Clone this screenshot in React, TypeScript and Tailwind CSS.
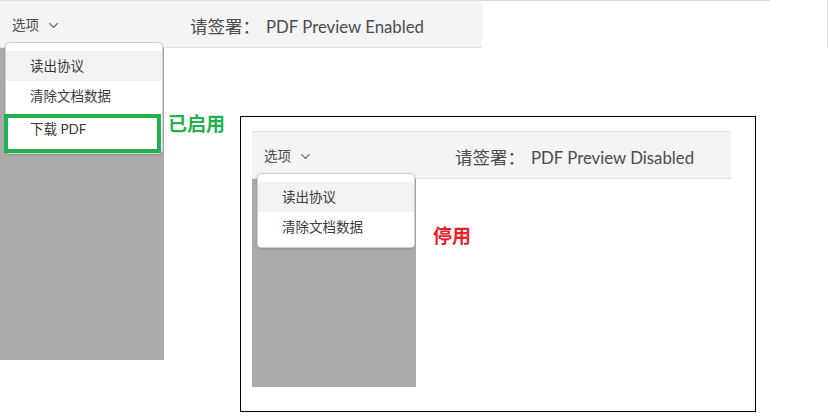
import { ChevronDown } from "lucide-react";

const font = { fontFamily: 'Lato, "Noto Sans CJK SC", sans-serif' };

function Header({ title, gap }: { title: string; gap: string }) {
  return (
    <div className="flex h-[48px] items-center border-y border-[#e2e2e2] bg-[#f4f4f4] pt-[2px] text-[#4b4b4b]">
      <div className={`flex ${gap} items-center gap-[7px] pl-[12px] text-[13.5px]`}>
        <span>选项</span>
        <ChevronDown className="h-[15px] w-[15px] text-[#6b6b6b]" strokeWidth={2.2} />
      </div>
      <div className="flex items-center pt-[4px] text-[17.5px]">
        <span>请签署：</span>
        <span className="ml-[6px] text-[16.8px]">{title}</span>
      </div>
    </div>
  );
}

function Menu({ download }: { download?: boolean }) {
  return (
    <div className="absolute left-[5px] top-[-6px] flex w-[158px] flex-col rounded-[4px] border border-[#cfcfcf] bg-white pt-[8px] text-[13.5px] text-[#3a3a3a] shadow-[0_1px_2px_rgba(0,0,0,0.15)]">
      <div className="flex h-[30px] items-center bg-[#f2f2f2] pl-[24px]">读出协议</div>
      <div className={`flex h-[30px] items-center pl-[24px] ${download ? "" : "mb-[5px]"}`}>清除文档数据</div>
      {download && (
        <div className="-ml-[2px] mt-[3px] h-[39px] w-[157px] border-[4px] border-[#22b14c] pl-[22px] pt-[1px]">
          下载 PDF
        </div>
      )}
    </div>
  );
}

export default function App() {
  return (
    <div className="relative h-[420px] w-[829px] overflow-hidden bg-white" style={font}>
      {/* enabled */}
      <div className="absolute left-0 top-0 w-[770px] border-t border-[#d8d8d8]" />
      <div className="absolute left-[827px] top-0 h-[48px] border-l border-[#e4e4e4]" />
      <div className="absolute left-0 top-0 w-[482px]">
        <Header title="PDF Preview Enabled" gap="w-[190px]" />
        <div className="relative h-[312px] w-[164px] bg-[#aaaaaa]">
          <Menu download />
        </div>
      </div>
      <div className="absolute left-[168px] top-[110px] text-[19px] font-bold text-[#22b14c]">已启用</div>

      {/* disabled */}
      <div className="absolute left-[240px] top-[116px] h-[296px] w-[516px] border border-black bg-white pl-[11px] pt-[14px]">
        <div className="w-[479px]">
          <Header title="PDF Preview Disabled" gap="w-[203px]" />
          <div className="relative h-[208px] w-[164px] bg-[#aaaaaa]">
            <Menu />
          </div>
        </div>
      </div>
      <div className="absolute left-[433px] top-[222px] text-[19px] font-bold text-[#e8222a]">停用</div>
    </div>
  );
}
